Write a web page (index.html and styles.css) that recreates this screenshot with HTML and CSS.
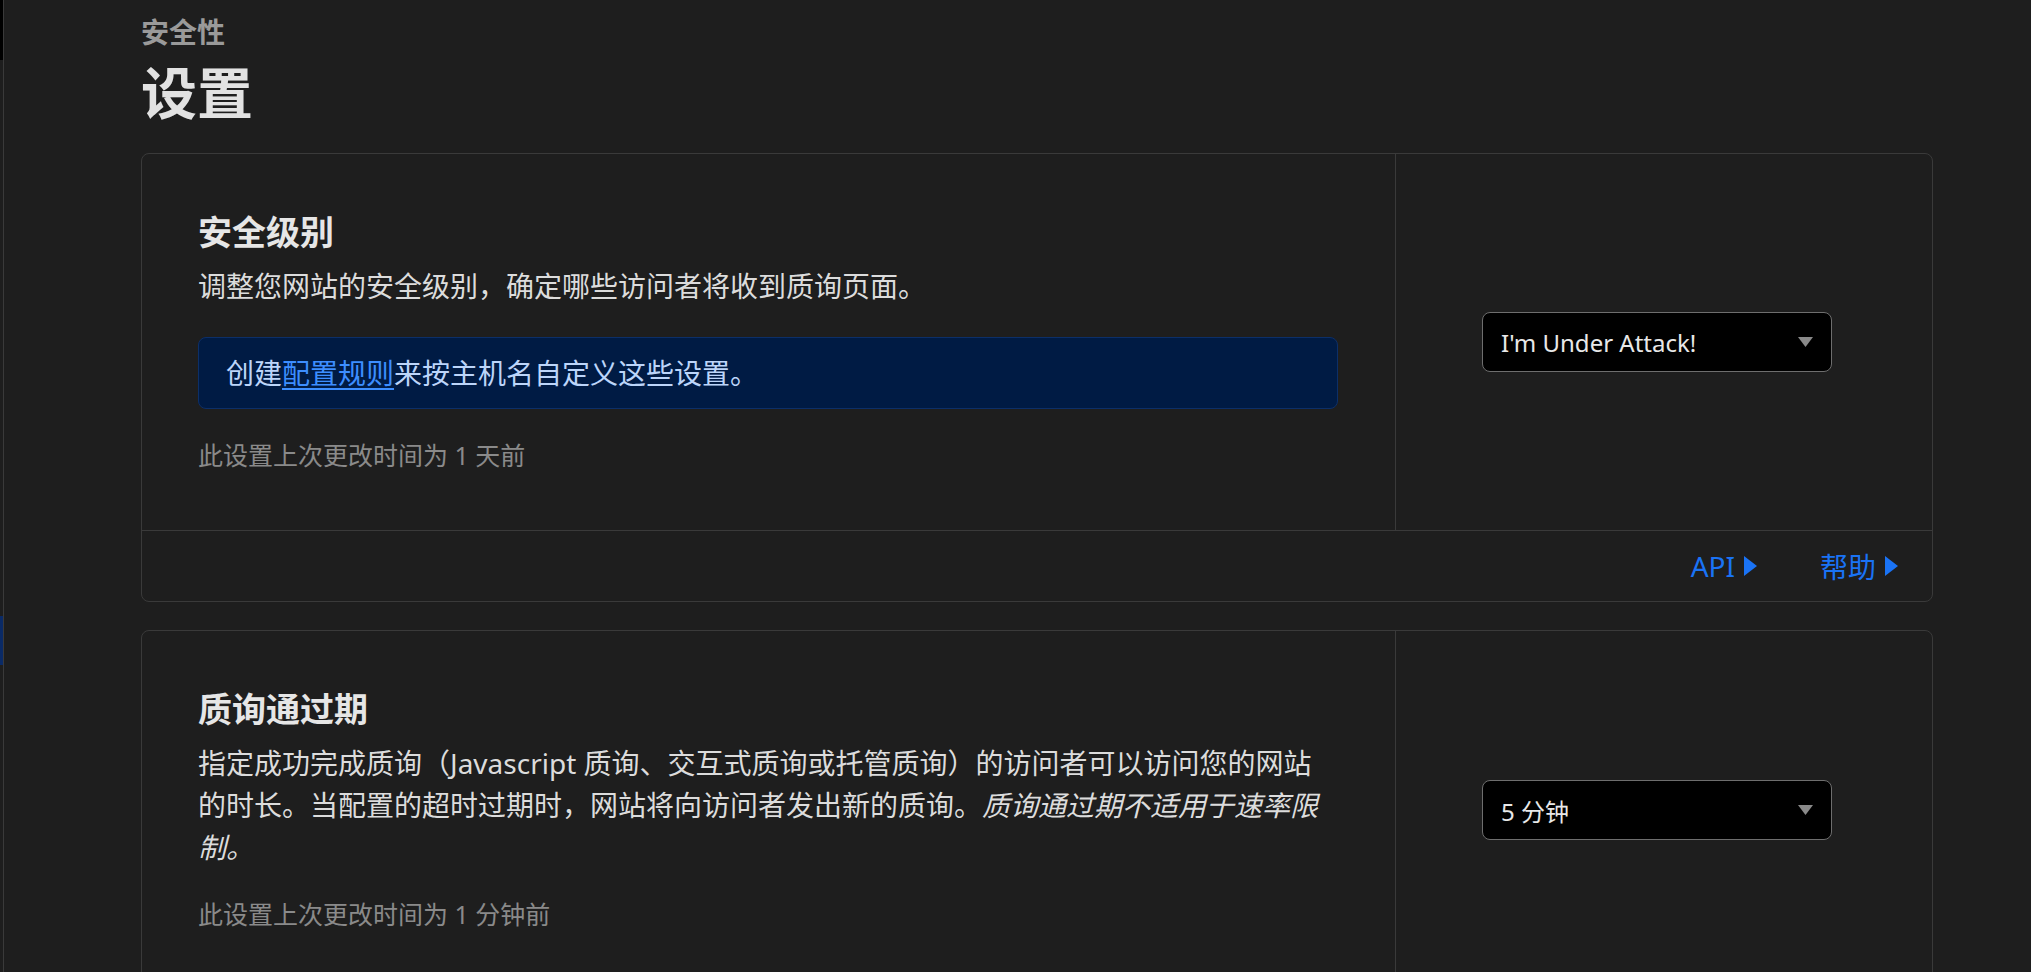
FILE: index.html
```html
<!DOCTYPE html>
<html lang="zh-CN">
<head>
    <meta charset="UTF-8">
    <meta name="viewport" content="width=device-width, initial-scale=1.0">
    <title>安全性 - 设置</title>
    <link rel="stylesheet" href="styles.css">
</head>
<body>

    <div class="rail">
        <div class="rail-top"></div>
        <div class="rail-gap"></div>
        <div class="rail-active"></div>
    </div>

    <main class="page">
        <div class="eyebrow">安全性</div>
        <h1>设置</h1>

        <!-- 安全级别 -->
        <section class="card">
            <div class="card-main">
                <h3 class="card-title">安全级别</h3>
                <p class="card-desc">调整您网站的安全级别，确定哪些访问者将收到质询页面。</p>
                <div class="notice">创建<a href="#">配置规则</a>来按主机名自定义这些设置。</div>
                <div class="stamp">此设置上次更改时间为 1 天前</div>
            </div>
            <div class="card-side">
                <div class="select">
                    <span>I'm Under Attack!</span>
                    <svg class="caret" width="15" height="10" viewBox="0 0 15 10"><path d="M0 0H15L7.5 10Z" fill="#8a8a8a"/></svg>
                </div>
            </div>
            <div class="card-foot">
                <a href="#" class="foot-link">API<svg class="tri" width="13" height="20" viewBox="0 0 13 20"><path d="M0 0L13 10L0 20Z" fill="#1a73f5"/></svg></a>
                <a href="#" class="foot-link">帮助<svg class="tri" width="13" height="20" viewBox="0 0 13 20"><path d="M0 0L13 10L0 20Z" fill="#1a73f5"/></svg></a>
            </div>
        </section>

        <!-- 质询通过期 -->
        <section class="card">
            <div class="card-main">
                <h3 class="card-title">质询通过期</h3>
                <p class="card-desc">指定成功完成质询（Javascript 质询、交互式质询或托管质询）的访问者可以访问您的网站的时长。当配置的超时过期时，网站将向访问者发出新的质询。<em>质询通过期不适用于速率限制。</em></p>
                <div class="stamp">此设置上次更改时间为 1 分钟前</div>
            </div>
            <div class="card-side">
                <div class="select">
                    <span>5 分钟</span>
                    <svg class="caret" width="15" height="10" viewBox="0 0 15 10"><path d="M0 0H15L7.5 10Z" fill="#8a8a8a"/></svg>
                </div>
            </div>
        </section>
    </main>

</body>
</html>
```

FILE: styles.css
```css
body {
    margin: 0;
    background-color: #1e1e1e;
    font-family: "Noto Sans", "Noto Sans CJK SC", sans-serif;
    color: #dedede;
    display: flex;
    min-height: 100vh;
    overflow: hidden;
}

/* barra lateral plegada */
.rail {
    width: 3px;
    border-right: 1px solid #3a3a3a;
    display: flex;
    flex-direction: column;
    flex-shrink: 0;
}

.rail-top {
    height: 60px;
    background-color: #000;
}

.rail-gap {
    height: 556px;
}

.rail-active {
    height: 49px;
    background-color: #0a2a66;
}

.page {
    padding: 16px 0 0 137px;
}

.eyebrow {
    font-size: 28px;
    line-height: 32px;
    font-weight: 700;
    color: #9a9a9a;
}

h1 {
    margin: 12px 0 29px;
    font-size: 56px;
    line-height: 64px;
    font-weight: 700;
    color: #e2e2e2;
}

.card {
    width: 1792px;
    box-sizing: border-box;
    border: 1px solid #3a3a3a;
    border-radius: 8px;
    display: grid;
    grid-template-columns: 1253px 1fr;
    margin-bottom: 28px;
}

.card-main {
    padding: 53px 57px 57px 56px;
}

.card-title {
    margin: 0;
    font-size: 34px;
    line-height: 50px;
    font-weight: 700;
    color: #e6e6e6;
}

.card-desc {
    margin: 8px 0 0;
    font-size: 28px;
    line-height: 42px;
    color: #dcdcdc;
}

.card-desc em {
    font-style: italic;
}

.notice {
    margin-top: 30px;
    padding: 14px 27px;
    background-color: #001b44;
    border: 1px solid #0c2f68;
    border-radius: 8px;
    font-size: 28px;
    line-height: 42px;
    color: #bcd5fa;
}

.notice a {
    color: #3d8eff;
    text-decoration: underline;
    text-underline-offset: 4px;
}

.stamp {
    margin-top: 28px;
    font-size: 25px;
    line-height: 36px;
    color: #8a8a8a;
}

.card-side {
    border-left: 1px solid #3a3a3a;
    display: flex;
    align-items: center;
    padding-left: 86px;
}

.select {
    width: 350px;
    height: 60px;
    box-sizing: border-box;
    background-color: #000;
    border: 1px solid #6e6e6e;
    border-radius: 8px;
    display: flex;
    align-items: center;
    justify-content: space-between;
    padding: 0 18px 0 18px;
    font-size: 24px;
    color: #e8e8e8;
}

.caret {
    display: block;
}

.card-foot {
    grid-column: 1 / 3;
    border-top: 1px solid #3a3a3a;
    height: 70px;
    display: flex;
    align-items: center;
    justify-content: flex-end;
    gap: 63px;
    padding-right: 34px;
}

.foot-link {
    display: flex;
    align-items: center;
    gap: 9px;
    font-size: 28px;
    color: #1a73f5;
    text-decoration: none;
}

.tri {
    display: block;
}
```
